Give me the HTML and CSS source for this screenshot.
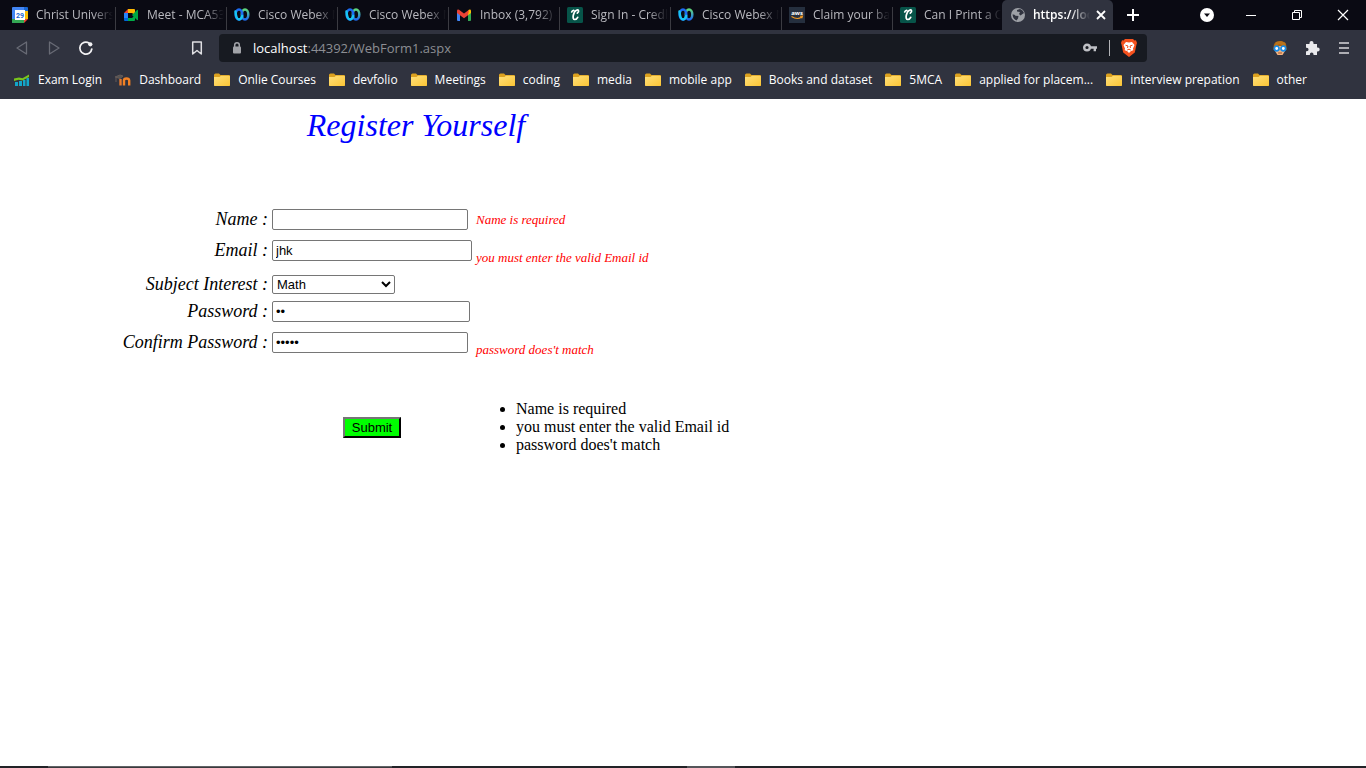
FILE: index.html
```html
<!DOCTYPE html>
<html lang="en">
<head>
<meta charset="utf-8">
<title>Register Yourself</title>
<link rel="stylesheet" href="styles.css">
</head>
<body>
<svg class="defs" aria-hidden="true">
  <defs>
    <linearGradient id="folder-fill" x1="0" y1="0" x2="1" y2="1"><stop offset="0" stop-color="#ffe07a"/><stop offset="1" stop-color="#fbc535"/></linearGradient>
    <linearGradient id="webex-right" x1="0" y1="0" x2="0" y2="1"><stop offset="0" stop-color="#5fd67e"/><stop offset="1" stop-color="#1f6df2"/></linearGradient>
    <symbol id="folder" viewBox="0 0 16 16"><path d="M0 3q0-1.500 1.500-1.500h3.500l1.500 1.500h8.500q1 0 1 1v9q0 1-1 1H1q-1 0-1-1z" fill="#dca11f"/><path d="M0 5h5.500L7 3.700h8q1 0 1 1V13q0 1-1 1H1q-1 0-1-1z" fill="url(#folder-fill)"/></symbol>
    <symbol id="webex" viewBox="0 0 16 16"><ellipse cx="11" cy="7.500" rx="3.300" ry="5" fill="none" stroke="url(#webex-right)" stroke-width="2.500"/><ellipse cx="5" cy="7.500" rx="3.300" ry="5" fill="none" stroke="#1c6cf3" stroke-width="2.500"/><path d="M1.500 4.500c.3 4.500 1.500 8 3.700 8 1.500 0 2.400-1.500 3-3.500" fill="none" stroke="#18c6f4" stroke-width="2.500" stroke-linecap="round"/></symbol>
    <symbol id="chegg" viewBox="0 0 16 16"><rect width="16" height="16" rx="1.500" fill="#075449"/><path d="M10.300 6.200c2.500-2 1-3.700-.8-3-3 1.200-5 9.300-1.700 9.300 1.200 0 2.200-.8 2.900-2.200M4.700 5q.5-1.500 2-1.700" fill="none" stroke="#fff" stroke-width="1.700" stroke-linecap="round"/></symbol>
  </defs>
</svg>

<header class="browser">
  <div class="tabstrip">
    <div class="tabs" role="tablist">
      <button class="tab" role="tab"><svg class="icon" viewBox="0 0 16 16"><path d="M0 1q0-1 1-1h11v16H1q-1 0-1-1z" fill="#4285f4"/><path d="M12 0h3q1 0 1 1v3h-4z" fill="#1967d2"/><path d="M12 4h4v8h-4z" fill="#fbbc04"/><path d="M0 12h12v4H1q-1 0-1-1z" fill="#34a853"/><path d="M12 12h4l-4 4z" fill="#ea4335"/><path d="M3 3h10v10H3z" fill="#fff"/><text x="8" y="11" class="calendar-day">29</text></svg><span class="tab-title">Christ Univers</span></button>
      <button class="tab" role="tab"><svg class="icon" viewBox="0 0 16 16"><path d="M1 6l4-4v4z" fill="#ea4335"/><path d="M1 6h4v5H1z" fill="#2684fc"/><path d="M1 11h4v3H2q-1 0-1-1z" fill="#0066da"/><path d="M5 2h6q1 0 1 1v5L9 6H5z" fill="#ffba00"/><path d="M5 11h4l3-3v5q0 1-1 1H5z" fill="#00ac47"/><path d="M9 8l5-5q1-.5 1 .500v9q0 1-1 .5z" fill="#00a843"/></svg><span class="tab-title">Meet - MCA53</span></button>
      <button class="tab" role="tab"><svg class="icon"><use href="#webex"/></svg><span class="tab-title">Cisco Webex M</span></button>
      <button class="tab" role="tab"><svg class="icon"><use href="#webex"/></svg><span class="tab-title">Cisco Webex M</span></button>
      <button class="tab" role="tab"><svg class="icon" viewBox="0 0 16 16"><path d="M1 4l3 2v8H2q-1 0-1-1z" fill="#4285f4"/><path d="M12 6l3-2v9q0 1-1 1h-2z" fill="#34a853"/><path d="M12 3.500l1-.8q2-.7 2 1.300v2l-3 2.200z" fill="#fbbc04"/><path d="M1 4q0-2 2-1.300L8 6.500l5-3.800-1 5.500-4 3-4-3-3-2.200z" fill="#ea4335"/></svg><span class="tab-title">Inbox (3,792) -</span></button>
      <button class="tab" role="tab"><svg class="icon"><use href="#chegg"/></svg><span class="tab-title">Sign In - Credl</span></button>
      <button class="tab" role="tab"><svg class="icon"><use href="#webex"/></svg><span class="tab-title">Cisco Webex M</span></button>
      <button class="tab" role="tab"><svg class="icon" viewBox="0 0 16 16"><path d="M0 0h16v16H0z" fill="#252f3e"/><text x="8" y="8" class="aws-word">aws</text><path d="M2.500 9.500q5.500 3.500 10 .8M11 9.300l2.500-.2-.8 2.200" fill="none" stroke="#f49a20" stroke-width="1.100"/></svg><span class="tab-title">Claim your ba</span></button>
      <button class="tab" role="tab"><svg class="icon"><use href="#chegg"/></svg><span class="tab-title">Can I Print a C</span></button>
      <div class="tab tab-active"><svg class="icon" viewBox="0 0 16 16"><circle cx="8" cy="8" r="7" fill="#9da0a6"/><path d="M2.500 7.500q2-.3 3 1.200l3 .3-.5 2.500-1.500 2q-3.500-1.500-4-6zM7 3l3-1q3 1 4 4l-1.500 1-2 1.500L9 7l1-2-3-.5z" fill="#30333f"/></svg><span class="tab-title" role="tab" aria-selected="true">https://loc</span><button class="tab-close" aria-label="Close tab"><svg viewBox="0 0 10 10"><path d="M1 1l8 8M9 1L1 9" fill="none" stroke="#fff" stroke-width="1.800"/></svg></button></div>
    </div>
    <button class="new-tab" aria-label="New tab"><svg viewBox="0 0 12 12"><path d="M6 0v12M0 6h12" stroke="#fff" stroke-width="2"/></svg></button>
    <div class="window-controls">
      <button class="search-tabs" aria-label="Search tabs"><svg viewBox="0 0 16 16"><circle cx="8" cy="8" r="7" fill="#fff"/><path d="M5 6.500h6L8 10z" fill="#0b0b14"/></svg></button>
      <button aria-label="Minimize"><svg viewBox="0 0 16 16"><path d="M3 8.500h10" stroke="#fff"/></svg></button>
      <button aria-label="Restore"><svg viewBox="0 0 16 16"><path d="M3.500 5.500h7v7h-7zM5.500 5V3.500h7v7H11" fill="none" stroke="#fff"/></svg></button>
      <button aria-label="Close"><svg viewBox="0 0 16 16"><path d="M3 3l10 10M13 3L3 13" stroke="#fff" stroke-width="1.200"/></svg></button>
    </div>
  </div>

  <div class="toolbar">
    <nav class="navigation" aria-label="History">
      <button aria-label="Back"><svg viewBox="0 0 16 16"><path d="M12.500 2v12L3 8z" fill="none" stroke="#686b75" stroke-width="1.300" stroke-linejoin="round"/></svg></button>
      <button aria-label="Forward"><svg viewBox="0 0 16 16"><path d="M3.500 2v12L13 8z" fill="none" stroke="#686b75" stroke-width="1.300" stroke-linejoin="round"/></svg></button>
      <button aria-label="Reload"><svg viewBox="0 0 16 16"><path d="M11 3a6 6 0 1 0 2.800 6" fill="none" stroke="#f2f2f4" stroke-width="1.700" stroke-linecap="round"/><circle cx="12.300" cy="4.300" r="2.100" fill="#f2f2f4"/></svg></button>
    </nav>
    <button class="bookmark-page" aria-label="Bookmark this page"><svg viewBox="0 0 16 16"><path d="M3.700 2h8.600v12L8 10.500 3.700 14z" fill="none" stroke="#dedee2" stroke-width="1.500" stroke-linejoin="round"/></svg></button>
    <div class="address-bar">
      <svg class="icon" viewBox="0 0 16 16"><rect x="4" y="6.500" width="8" height="7" rx="1" fill="#a1a3a8"/><path d="M5.700 7V5a2.300 2.300 0 0 1 4.600 0v2" fill="none" stroke="#a1a3a8" stroke-width="1.500"/></svg>
      <div class="address" role="textbox" contenteditable="true" spellcheck="false" aria-label="Address"><span class="host">localhost</span>:44392/WebForm1.aspx</div>
      <button aria-label="Saved passwords"><svg viewBox="0 0 16 16"><circle cx="5" cy="7.500" r="2.800" fill="none" stroke="#bfc0c5" stroke-width="2.400"/><path d="M8 7.500h7M12.800 7.500v3.800" stroke="#bfc0c5" stroke-width="2.400"/></svg></button>
      <button class="shields" aria-label="Brave Shields"><svg viewBox="0 0 16 18"><path d="M4 0h8l1.500 1.500 1.500-.2L16 4l-.5 1.500-1.700 8L8 18l-5.800-4.500-1.700-8L0 4l1-2.700 1.500.2z" fill="#f4511e"/><path d="M5 3l3 .5L11 3l2.500 3-1.500 3.500.3 1.700-2.300.8-2 2-2-2-2.300-.8.300-1.700L2.500 6z" fill="#fff"/><path d="M4.500 6.200L7 7l-.5 2M11.500 6.200L9 7l.5 2M6.200 11L8 10.200l1.800.8" fill="none" stroke="#f4511e"/></svg></button>
    </div>
    <div class="extensions">
      <button aria-label="Profile"><svg viewBox="0 0 16 16"><path d="M1.500 7q0-6 6.500-6t6.500 6v3h-13z" fill="#a76113"/><path d="M3 6h10v5l-2.500 4h-5L3 11z" fill="#f2b483"/><path d="M2.500 6Q6 5 7.500 4q2.500 2 6 2V3L9 1 4 2z" fill="#b8731c"/><circle cx="4.700" cy="8.500" r="2.300" fill="#fff" stroke="#168ce8" stroke-width="1.700"/><circle cx="11.300" cy="8.500" r="2.300" fill="#fff" stroke="#168ce8" stroke-width="1.700"/><path d="M6 13h4" stroke="#a4582c"/></svg></button>
      <button aria-label="Extensions"><svg viewBox="0 0 16 16"><path d="M2 4h3.500V3a2 2 0 0 1 4 0v1H13v3.500h.700a2 2 0 0 1 0 4H13V15H9.500v-.7a1.800 1.800 0 0 0-3.600 0v.7H2v-3.700h.8a1.700 1.700 0 0 0 0-3.500H2z" fill="#e9e9ec"/></svg></button>
      <button aria-label="Menu"><svg viewBox="0 0 16 16"><path d="M3 3h10M3 8h10M3 13h10" stroke="#d7d8dc" stroke-width="1.600"/></svg></button>
    </div>
  </div>

  <nav class="bookmarks" aria-label="Bookmarks">
    <a href="#"><svg class="icon" viewBox="0 0 16 16"><path d="M1 10h3v4H1zM5 9h3v5H5zM9 8h2.500v6H9zM12.500 6H15v8h-2.500z" fill="#13a5c8"/><path d="M0 9V6.500L5 5.500l3.500.8L15 2.500V5L8.500 8.500 4.500 7.800z" fill="#7ac51c"/></svg>Exam Login</a>
    <a href="#"><svg class="icon" viewBox="0 0 16 16"><path d="M9 13.500V8.500q0-2 2.500-2t2.700 2v5" fill="none" stroke="#f28124" stroke-width="2.400"/><path d="M5.500 13.500V7" stroke="#e6792b" stroke-width="2.400"/><path d="M0 5l5-2 3 1-3 2.500zM1 6v4" fill="#555" stroke="#645b58"/></svg>Dashboard</a>
    <a href="#"><svg class="icon"><use href="#folder"/></svg>Onlie Courses</a>
    <a href="#"><svg class="icon"><use href="#folder"/></svg>devfolio</a>
    <a href="#"><svg class="icon"><use href="#folder"/></svg>Meetings</a>
    <a href="#"><svg class="icon"><use href="#folder"/></svg>coding</a>
    <a href="#"><svg class="icon"><use href="#folder"/></svg>media</a>
    <a href="#"><svg class="icon"><use href="#folder"/></svg>mobile app</a>
    <a href="#"><svg class="icon"><use href="#folder"/></svg>Books and dataset</a>
    <a href="#"><svg class="icon"><use href="#folder"/></svg>5MCA</a>
    <a href="#"><svg class="icon"><use href="#folder"/></svg>applied for placem...</a>
    <a href="#"><svg class="icon"><use href="#folder"/></svg>interview prepation</a>
    <a href="#"><svg class="icon"><use href="#folder"/></svg>other</a>
  </nav>
</header>

<main class="page">
  <h1 class="title">Register Yourself</h1>
  <form class="form" novalidate>
    <div class="row">
      <label for="name">Name :</label>
      <input class="field" id="name" type="text">
      <span class="error">Name is required</span>
    </div>
    <div class="row">
      <label for="email">Email :</label>
      <input class="field field-email" id="email" type="text" value="jhk">
      <span class="error error-low">you must enter the valid Email id</span>
    </div>
    <div class="row row-subject">
      <label for="subject">Subject Interest :</label>
      <select class="subject" id="subject"><option>Math</option></select>
    </div>
    <div class="row">
      <label for="password">Password :</label>
      <input class="field field-password" id="password" type="password" value="ab">
    </div>
    <div class="row">
      <label for="confirm">Confirm Password :</label>
      <input class="field" id="confirm" type="password" value="abcde">
      <span class="error error-low">password does't match</span>
    </div>
    <div class="row row-submit">
      <button class="submit" type="button">Submit</button>
      <ul class="summary">
        <li>Name is required</li>
        <li>you must enter the valid Email id</li>
        <li>password does't match</li>
      </ul>
    </div>
  </form>
</main>

<footer class="taskbar"><span class="task-search"></span><span class="task-active"></span></footer>
</body>
</html>
```
FILE: styles.css
```css
* { box-sizing: border-box; }

body {
  display: flex;
  flex-direction: column;
  min-height: 100vh;
  margin: 0;
  background: #fff;
  color: #000;
  font-family: "Liberation Serif", "Times New Roman", serif;
  font-size: 16px;
}

.defs { position: absolute; width: 0; height: 0; }

/* Browser frame */
.browser {
  background: #30333f;
  color: #fff;
  font: 12px/16px "Open Sans", "Segoe UI", sans-serif;
}

.browser button {
  display: flex;
  align-items: center;
  justify-content: center;
  padding: 0;
  border: 0;
  background: none;
  color: inherit;
  font: inherit;
}

.browser svg { display: block; flex: none; width: 16px; height: 16px; }

.tabstrip { display: flex; height: 30px; padding-left: 4px; background: #0a0a13; }
.tabs { display: flex; }

.browser .tab {
  position: relative;
  display: flex;
  align-items: center;
  justify-content: flex-start;
  gap: 8px;
  width: 111px;
  padding: 0 2px 0 8px;
  color: #b9b9bf;
}

.tab:not(.tab-active)::after {
  content: "";
  position: absolute;
  top: 7px;
  right: -1px;
  bottom: 0;
  width: 1px;
  background: #3b3b42;
}

.tab:nth-child(9)::after { display: none; }

.tab-title {
  flex: 1;
  min-width: 0;
  overflow: hidden;
  text-align: left;
  white-space: nowrap;
  -webkit-mask-image: linear-gradient(to right, #000 calc(100% - 20px), transparent);
  mask-image: linear-gradient(to right, #000 calc(100% - 20px), transparent);
}

.browser .tab-active {
  gap: 7px;
  margin-left: -1px;
  padding-right: 4px;
  border-radius: 5px 5px 0 0;
  background: #30333f;
  color: #fff;
  font-weight: 600;
}

.browser .tab-close { width: 16px; height: 16px; margin-left: -4px; }
.browser .tab-close svg { width: 10px; height: 10px; }
.browser .new-tab { width: 40px; }
.browser .new-tab svg { width: 12px; height: 12px; }

.calendar-day { fill: #1967d2; font: bold 7px Roboto, sans-serif; text-anchor: middle; }
.aws-word { fill: #fff; font: bold 6px "Open Sans", sans-serif; text-anchor: middle; }

.window-controls { display: flex; margin-left: auto; }
.window-controls button { width: 46px; }
.window-controls .search-tabs { width: 42px; }

.toolbar { display: flex; align-items: center; height: 36px; padding: 0 14px; }
.navigation { display: flex; gap: 16px; }
.browser .bookmark-page { margin-left: 95px; }

.address-bar {
  display: flex;
  flex: 1;
  align-items: center;
  gap: 8px;
  height: 28px;
  margin-left: 14px;
  padding: 0 10px;
  border-radius: 4px;
  background: #171a21;
}

.address { flex: 1; color: #8c8e93; font-size: 13px; line-height: 20px; }
.host { color: #fff; }

.browser .shields { gap: 11px; margin-left: 3px; }
.shields::before { content: ""; width: 1px; height: 16px; background: #b2b3b7; }
.browser .shields svg { height: 18px; }

.extensions { display: flex; gap: 16px; margin-left: 125px; }

.bookmarks { display: flex; gap: 13px; height: 33px; padding: 6px 14px 0; }

.bookmarks a {
  display: flex;
  gap: 8px;
  color: #fff;
  text-decoration: none;
  white-space: nowrap;
}

/* Registration form */
.page { flex: 1; }

.title {
  width: 832px;
  margin: 0;
  padding-top: 8px;
  color: #00f;
  font-size: 32px;
  font-style: italic;
  font-weight: 400;
  line-height: 36px;
  text-align: center;
}

.form { padding-top: 61px; }

.row {
  display: grid;
  grid-template-columns: 268px 200px 1fr;
  column-gap: 4px;
  align-items: center;
  min-height: 31px;
}

.row label {
  padding-bottom: 2px;
  font-size: 18px;
  font-style: italic;
  line-height: 20px;
  text-align: right;
}

.row-subject { min-height: 30px; padding-top: 7px; }

.field {
  width: 196px;
  height: 21px;
  padding: 1px 3px;
  border: 1px solid #767676;
  border-radius: 2px;
  background: #fff;
  font: 13px "Liberation Sans", Arial, sans-serif;
}

.field-email { width: 200px; }
.field-password { width: 198px; }

.subject {
  width: 123px;
  height: 19px;
  border: 1px solid #767676;
  border-radius: 2px;
  background: #fff;
  color: #000;
  font: 13px "Liberation Sans", Arial, sans-serif;
}

.error { padding-bottom: 1px; color: #f00; font-size: 13px; font-style: italic; line-height: 15px; }
.error-low { align-self: end; }

.row-submit { padding-top: 42px; }

.submit {
  grid-column: 2;
  justify-self: center;
  width: 58px;
  height: 21px;
  padding: 0;
  border: 2px outset #767676;
  border-color: #767676 #212121 #212121 #767676;
  background: #0f0;
  color: #000;
  font: 13px "Liberation Sans", Arial, sans-serif;
}

.summary { margin: 0; padding-left: 40px; line-height: 18px; }

/* Edge of the desktop taskbar */
.taskbar { display: flex; height: 2px; padding-left: 48px; background: #222327; }
.task-search { width: 344px; border-top: 1px solid #626366; background: #3a3b3e; }
.task-active { width: 48px; margin-left: 295px; background: #55565a; }
```
